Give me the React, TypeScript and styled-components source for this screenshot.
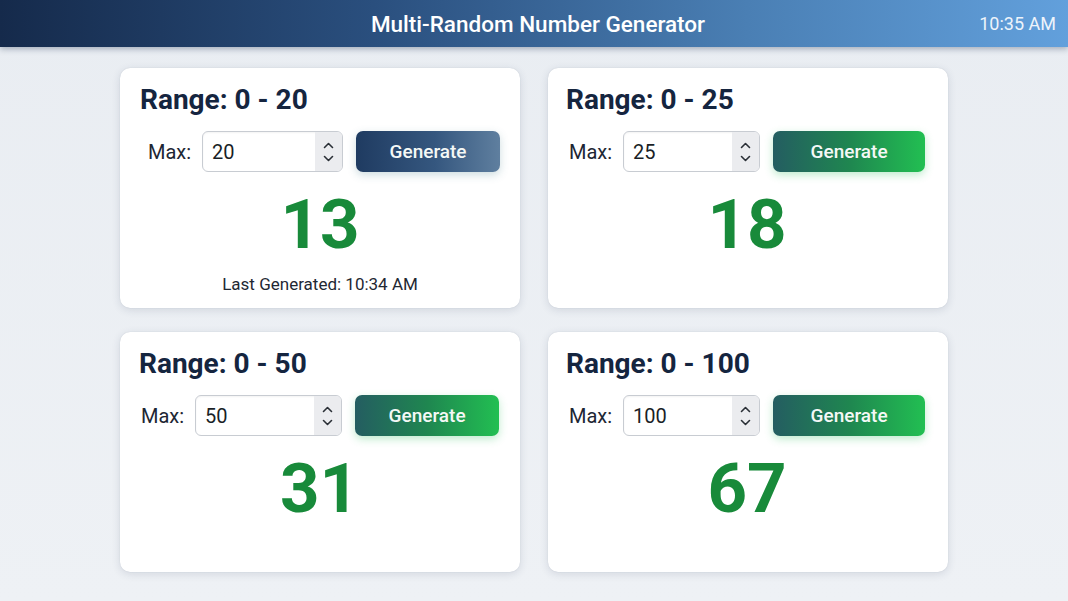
import React from "react";
import styled, { createGlobalStyle } from "styled-components";

const Global = createGlobalStyle`
  html, body { margin: 0; padding: 0; }
  body {
    background: #edf0f4;
    font-family: Roboto, "Noto Sans", "Liberation Sans", sans-serif;
    width: 1068px;
    height: 601px;
    overflow: hidden;
  }
`;

const Page = styled.div`
  width: 1068px;
  height: 601px;
  display: flex;
  flex-direction: column;
  background: linear-gradient(180deg, #e9edf2 0%, #eef1f5 100%);
`;

const Header = styled.header`
  height: 47px;
  flex: none;
  display: grid;
  grid-template-columns: 1fr auto 1fr;
  align-items: center;
  padding: 0 12px 0 20px;
  background: linear-gradient(90deg, #152a4b 0%, #2a4f7e 35%, #4a7fb4 70%, #62a0dc 100%);
  box-shadow: 0 2px 6px rgba(30, 50, 80, 0.35);
  color: #fff;
`;

const Title = styled.h1`
  grid-column: 2;
  margin: 0;
  font-size: 22.5px;
  font-weight: 500;
`;

const Clock = styled.div`
  grid-column: 3;
  justify-self: end;
  font-size: 18px;
  font-weight: 400;
  color: #eef4fb;
`;

const Grid = styled.main`
  display: grid;
  grid-template-columns: 400px 400px;
  grid-template-rows: 240px 240px;
  column-gap: 28px;
  row-gap: 24px;
  justify-content: center;
  padding-top: 21px;
`;

const Card = styled.section<{ $titleInset: number }>`
  background: #fff;
  border-radius: 10px;
  box-shadow: 0 2px 8px rgba(40, 60, 90, 0.14), 0 0 1px rgba(40, 60, 90, 0.2);
  padding: 16px 20px 0 ${(p) => p.$titleInset}px;
  display: flex;
  flex-direction: column;
`;

const RangeTitle = styled.h2`
  margin: 0;
  font-size: 28px;
  font-weight: 700;
  color: #15253f;
  line-height: 32px;
`;

const Controls = styled.div<{ $inset: number }>`
  display: flex;
  align-items: center;
  margin-top: 15px;
  padding-left: ${(p) => p.$inset}px;
`;

const Label = styled.span`
  font-size: 20px;
  color: #1d2633;
  margin-right: 11px;
`;

const NumberBox = styled.div<{ $width: number }>`
  width: ${(p) => p.$width}px;
  height: 41px;
  box-sizing: border-box;
  border: 1px solid #c8ccd2;
  border-radius: 6px;
  display: flex;
  overflow: hidden;
  background: #fff;
  box-shadow: inset 0 1px 2px rgba(0, 0, 0, 0.05);
`;

const NumberValue = styled.div`
  flex: 1;
  display: flex;
  align-items: center;
  padding-left: 9px;
  font-size: 20px;
  color: #1a1f27;
`;

const Spinner = styled.div`
  width: 27px;
  background: #ebecef;
  display: flex;
  flex-direction: column;
  align-items: center;
  justify-content: center;
  gap: 6px;
`;

const GenerateButton = styled.button<{ $variant: "blue" | "green"; $width: number }>`
  margin-left: 13px;
  width: ${(p) => p.$width}px;
  height: 41px;
  border: none;
  border-radius: 7px;
  color: #f4f8f6;
  font-family: Roboto, "Noto Sans", "Liberation Sans", sans-serif;
  font-size: 19px;
  font-weight: 500;
  background: ${(p) =>
    p.$variant === "blue"
      ? "linear-gradient(90deg, #1f3b61 0%, #35577f 55%, #5f7f9f 100%)"
      : "linear-gradient(90deg, #245d61 0%, #1f8650 50%, #22bf52 100%)"};
  box-shadow: ${(p) =>
    p.$variant === "blue"
      ? "0 3px 8px rgba(60, 120, 130, 0.25)"
      : "0 3px 9px rgba(40, 190, 90, 0.3)"};
`;

const Result = styled.div`
  text-align: center;
  font-size: 69px;
  font-weight: 700;
  color: #188a3a;
  line-height: 72px;
  margin-top: 17px;
`;

const LastGenerated = styled.div`
  text-align: center;
  font-size: 17px;
  color: #1f2833;
  margin-top: 13px;
`;

const Chevron = ({ up }: { up?: boolean }) => (
  <svg width="11" height="7" viewBox="0 0 11 7" fill="none">
    <path
      d={up ? "M1.5 5.5 L5.5 1.5 L9.5 5.5" : "M1.5 1.5 L5.5 5.5 L9.5 1.5"}
      stroke="#2a2f36"
      strokeWidth="1.6"
      strokeLinecap="round"
      strokeLinejoin="round"
    />
  </svg>
);

type Gen = {
  max: number;
  value: number;
  variant: "blue" | "green";
  titleInset: number;
  inset: number;
  inputWidth: number;
  buttonWidth: number;
  last?: string;
};

const gens: Gen[] = [
  { max: 20, value: 13, variant: "blue", titleInset: 20, inset: 8, inputWidth: 142, buttonWidth: 145, last: "10:34 AM" },
  { max: 25, value: 18, variant: "green", titleInset: 18, inset: 3, inputWidth: 137, buttonWidth: 152 },
  { max: 50, value: 31, variant: "green", titleInset: 19, inset: 2, inputWidth: 147, buttonWidth: 144 },
  { max: 100, value: 67, variant: "green", titleInset: 18, inset: 3, inputWidth: 137, buttonWidth: 152 },
];

export default function App() {
  return (
    <>
      <Global />
      <Page>
        <Header>
          <Title>Multi-Random Number Generator</Title>
          <Clock>10:35 AM</Clock>
        </Header>
        <Grid>
          {gens.map((g) => (
            <Card key={g.max} $titleInset={g.titleInset}>
              <RangeTitle>Range: 0 - {g.max}</RangeTitle>
              <Controls $inset={g.inset}>
                <Label>Max:</Label>
                <NumberBox $width={g.inputWidth}>
                  <NumberValue>{g.max}</NumberValue>
                  <Spinner>
                    <Chevron up />
                    <Chevron />
                  </Spinner>
                </NumberBox>
                <GenerateButton $variant={g.variant} $width={g.buttonWidth}>
                  Generate
                </GenerateButton>
              </Controls>
              <Result>{g.value}</Result>
              {g.last && <LastGenerated>Last Generated: {g.last}</LastGenerated>}
            </Card>
          ))}
        </Grid>
      </Page>
    </>
  );
}
